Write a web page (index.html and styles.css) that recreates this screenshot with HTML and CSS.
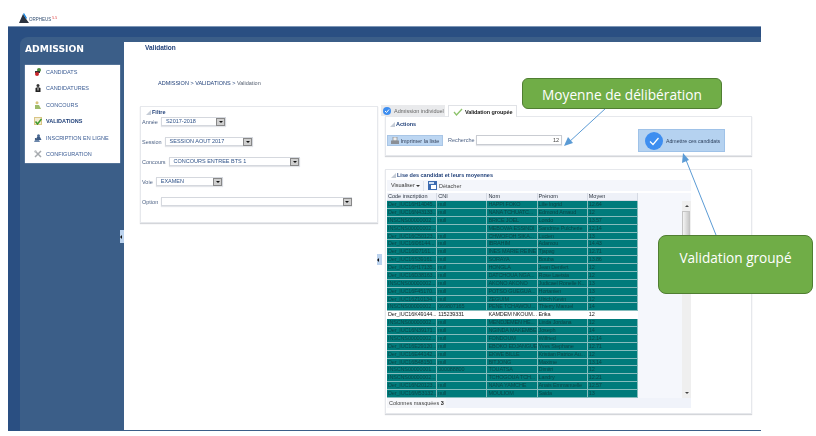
FILE: index.html
```html
<!DOCTYPE html>
<html lang="fr">
<head>
<meta charset="UTF-8">
<title>Morpheus - Validation</title>
<link rel="stylesheet" href="styles.css">
</head>
<body>
<div class="page">

  <div class="logo">
    <svg width="11" height="10" viewBox="0 0 11 10"><path d="M0 10 4 1l2 3 1.500 2.500L10 10z" fill="#2b3340"/><path d="M4 1l1-1 3 5-1 1z" fill="#1c86e0"/></svg>
    <span class="logo-name">ORPHEUS</span><span class="logo-ver">5.5</span>
  </div>

  <div class="frame">
    <aside class="side">
      <h2>ADMISSION</h2>
      <nav class="menu">
        <a><svg viewBox="0 0 8 8"><circle cx="5" cy="2" r="2" fill="#4c8a3a"/><rect x="1" y="3" width="5" height="2" fill="#333"/><circle cx="3" cy="6" r="2" fill="#c9252b"/></svg>CANDIDATS</a>
        <a><svg viewBox="0 0 8 8"><circle cx="4" cy="1.600" r="1.500" fill="#333"/><path d="M1.500 8V4l2.500-1 2.500 1v4z" fill="#222"/><path d="M3.500 3.500h1v3h-1z" fill="#ddd"/></svg>CANDIDATURES</a>
        <a><svg viewBox="0 0 8 8"><circle cx="3" cy="1.800" r="1.500" fill="#d8c27a"/><path d="M1 8V4h4l2 4z" fill="#9dbb6a"/></svg>CONCOURS</a>
        <a class="on"><svg viewBox="0 0 8 8"><rect width="8" height="8" fill="#d9c586"/><rect x="1" y="1" width="6" height="6" fill="#f3ecd2"/><path d="M1.500 4.500 3.500 7 7.500 2" fill="none" stroke="#3d9a2c" stroke-width="1.500"/></svg>VALIDATIONS</a>
        <a><svg viewBox="0 0 8 8"><circle cx="4.500" cy="1.800" r="1.500" fill="#4b6a94"/><path d="M2 6l1-3h3l1.500 3z" fill="#3d5c86"/><circle cx="1.800" cy="5" r="1" fill="#2f4a70"/><path d="M0 8l1-2h4l1 2z" fill="#6c87ab"/></svg>INSCRIPTION EN LIGNE</a>
        <a><svg viewBox="0 0 8 8"><path d="M1 1l6 6M7 1 1 7" stroke="#a5a9ad" stroke-width="1.500"/><circle cx="1.500" cy="1.500" r="1.200" fill="#c2c5c8"/></svg>CONFIGURATION</a>
      </nav>
    </aside>

    <div class="main">
      <div class="content">
        <h1>Validation</h1>
        <p class="crumb">ADMISSION &gt; VALIDATIONS &gt; <span>Validation</span></p>

        <div class="panels">
          <section class="card filter">
            <h3>Filtre</h3>
            <div class="field first"><label>Année</label><div class="sel w-annee"><span>S2017-2018</span><i></i></div></div>
            <div class="field"><label>Session</label><div class="sel w-session"><span>SESSION AOUT 2017</span><i></i></div></div>
            <div class="field"><label>Concours</label><div class="sel w-concours"><span>CONCOURS ENTREE BTS 1</span><i></i></div></div>
            <div class="field"><label>Voie</label><div class="sel w-voie"><span>EXAMEN</span><i></i></div></div>
            <div class="field"><label>Option</label><div class="sel w-option"><span></span><i></i></div></div>
          </section>

          <div class="right">
            <div class="tabs">
              <div class="tab"><svg viewBox="0 0 8 8"><circle cx="4" cy="4" r="4" fill="#3e8ef0"/><path d="M2 4l1.500 1.500L6 2.500" fill="none" stroke="#fff"/></svg>Admission individuel</div>
              <div class="tab active"><svg viewBox="0 0 10 8"><path d="M1 4l2.500 3L9 1" fill="none" stroke="#8cc26a" stroke-width="1.300"/></svg>Validation groupée</div>
            </div>

            <section class="card actions">
              <h3>Actions</h3>
              <div class="action-row">
                <button class="print"><svg viewBox="0 0 8 8"><rect x="2" y="0" width="4" height="4" fill="#eee" stroke="#777" stroke-width=".6"/><rect y="3.500" width="8" height="3.500" fill="#8a8f96"/></svg>Imprimer la liste</button>
                <label>Recherche</label>
                <div class="search">12</div>
                <button class="admit"><svg viewBox="0 0 18 18"><circle cx="9" cy="9" r="9" fill="#3e8ef0"/><path d="M5 9.500l3 3 5.500-6.500" fill="none" stroke="#fff" stroke-width="1.200"/></svg>Admettre ces candidats</button>
              </div>
            </section>

            <section class="card list">
              <h3>Lise des candidat et leurs moyennes</h3>
              <div class="toolbar">
                <span class="view">Visualiser <b></b></span>
                <span class="sep"></span>
                <svg viewBox="0 0 9 9"><rect width="9" height="9" fill="#3c6bb0"/><rect x="1" y="1" width="5" height="2" fill="#cfe0f5"/><rect x="3" y="4" width="5" height="4" fill="#fff"/></svg>
                <span>Détacher</span>
              </div>
              <div class="grid">
                <div class="rows">
                  <div class="row head"><span>Code inscription</span><span>CNI</span><span>Nom</span><span>Prénom</span><span>Moyen</span></div>
                  <div class="row"><span>Der_IUC16H14045...</span><span>null</span><span>HAPPI FOKO</span><span>Lilie Ingrid</span><span>12.64</span></div>
                  <div class="row"><span>Der_IUC16N43133...</span><span>null</span><span>NANA TCHUATC...</span><span>Edmond Arnaud</span><span>12</span></div>
                  <div class="row"><span>INSCNS00000002...</span><span>null</span><span>BRICE JOEL</span><span>Londo</span><span>13.57</span></div>
                  <div class="row"><span>INSCNS00000002...</span><span></span><span>MEBOWA ESSINDI</span><span>Sandrine Pulcherie</span><span>12.14</span></div>
                  <div class="row"><span>Der_IUC16C50123...</span><span>null</span><span>CHWOFOH SIKA...</span><span>Lucien</span><span>13</span></div>
                  <div class="row"><span>Der_IUC16I06144...</span><span>null</span><span>IBRAHIM</span><span>Adamou</span><span>14.43</span></div>
                  <div class="row"><span>Der_IUC16I07161...</span><span>null</span><span>INES MARIE REINE</span><span>Tjapag</span><span>12.71</span></div>
                  <div class="row"><span>Der_IUC16S39161...</span><span>null</span><span>SORAYA</span><span>Bouba</span><span>13.86</span></div>
                  <div class="row"><span>Der_IUC16H17135...</span><span>null</span><span>HONGLA</span><span>Jean Denfert</span><span>12</span></div>
                  <div class="row"><span>Der_IUC16D38163...</span><span>null</span><span>DATCHOUA NGA...</span><span>Rose Laetsia</span><span>12</span></div>
                  <div class="row"><span>INSCNS00000002...</span><span>null</span><span>AKONO AKONO</span><span>Judicael Ronelle K...</span><span>13</span></div>
                  <div class="row"><span>Der_IUC16F45170...</span><span>null</span><span>POTSO GUEGUA...</span><span>Hortanien</span><span>13</span></div>
                  <div class="row"><span>Der_IUC16Z10134...</span><span>null</span><span>ZEGUIM</span><span>Ulrich Kevin</span><span>12</span></div>
                  <div class="row"><span>INSCNS00000002...</span><span>069807165</span><span>PENE TCHAWOU...</span><span>Thierry Manuel</span><span>14</span></div>
                  <div class="row plain"><span>Der_IUC16K49144...</span><span>115239331</span><span>KAMDEM NKOUM...</span><span>Erika</span><span>12</span></div>
                  <div class="row"><span>INSCNS00000002...</span><span>null</span><span>MENDJEMEN HE...</span><span>Linda Jordana</span><span>12</span></div>
                  <div class="row"><span>Der_IUC16N39171...</span><span>null</span><span>NGINDA MAKEMBE</span><span>Joseph</span><span>14</span></div>
                  <div class="row"><span>INSCNS00000002...</span><span>null</span><span>FONDOUM</span><span>Wilfried</span><span>12.14</span></div>
                  <div class="row"><span>Der_IUC16E29120...</span><span>null</span><span>EBOKO EDJANGUE</span><span>Yves Stephane</span><span>12.71</span></div>
                  <div class="row"><span>Der_IUC16E44142...</span><span>null</span><span>EKWE BILLE</span><span>Kristian Patrice Au...</span><span>12</span></div>
                  <div class="row"><span>Der_IUC16B48150...</span><span>null</span><span>BITJONG</span><span>Maxime</span><span>13.14</span></div>
                  <div class="row"><span>INSCNS00000001...</span><span>000088800</span><span>TOUATSA</span><span>Dimitri</span><span>12</span></div>
                  <div class="row"><span>INSCNS00000002...</span><span></span><span>TCHOGOUA TCH...</span><span>Landry</span><span>12.21</span></div>
                  <div class="row"><span>Der_IUC16N20123...</span><span>null</span><span>NANA YAMCHE</span><span>Anais Emmanuelle</span><span>12.57</span></div>
                  <div class="row"><span>Der_IUC16M53132...</span><span>null</span><span>MOULIOM</span><span>Saida</span><span>13</span></div>
                </div>
                <div class="scroll"><i class="up"></i><div class="thumb"></div><i class="down"></i></div>
              </div>
              <div class="masked"><span>Colonnes masquées <b>3</b></span></div>
            </section>
          </div>
        </div>
      </div>
    </div>
  </div>

  <div class="handle h-side"></div>
  <div class="handle h-mid"></div>

  <svg class="arrows" width="816" height="436" viewBox="0 0 816 436">
    <path d="M606 108 568 143" stroke="#5b9bd5" fill="none"/>
    <path d="M564 146l4-9 5 6z" fill="#5b9bd5"/>
    <path d="M716 235 686 160" stroke="#5b9bd5" fill="none"/>
    <path d="M683 153l6 7-7 3z" fill="#5b9bd5"/>
  </svg>
  <div class="callout c-moy">Moyenne de délibération</div>
  <div class="callout c-val">Validation groupé</div>
</div>
</body>
</html>
```
FILE: styles.css
```css
*{box-sizing:border-box}
body{margin:0;background:#fff;font-family:"Liberation Sans",Arial,sans-serif;font-size:5.5px;color:#1f3f78}
.page{position:relative;width:816px;height:436px;overflow:hidden}

/* logo */
.logo{height:26px;padding:13px 0 0 19px;display:flex;align-items:flex-start;filter:blur(.3px)}
.logo-name{font-size:4.500px;margin:4px 0 0 -1px;color:#334f72}
.logo-ver{font-size:3.500px;color:#d33;margin:3px 0 0 1px}

/* frame */
.frame{margin-left:8px;width:753px;height:405px;padding:10px 0 0 12px;display:flex;background:#2a4f82;border-top:1px solid #7d96b6;filter:blur(.3px)}
.side{width:104px;background:#3b5e88;border-top-left-radius:8px;padding:6px 4px 0 5px}
.side h2{margin:0 0 10px;height:12px;line-height:12px;font:bold 9.200px/12px "DejaVu Sans",sans-serif;color:#fff}
.menu{background:#fff;height:98px;box-shadow:0 0 1px #cfd8e4}
.menu a{display:flex;align-items:flex-start;height:16.450px;padding:4px 0 0 9px;gap:4px;color:#3b5c94;line-height:6px;white-space:nowrap}
.menu a svg{width:8px;height:8px;flex:none;margin-top:-1px}
.menu a.on{font-weight:bold;color:#1f3f78}

.main{flex:1;padding:5px 0 1px;background:#3b5e88}
.content{height:100%;background:#fff;padding-top:2px}
h1{margin:0 0 0 21px;font-size:6.500px;line-height:7px;font-weight:bold;color:#1f3f78}
.crumb{margin:28px 0 0 34px;line-height:8px}
.crumb span{color:#555f70}
.panels{display:flex;margin:18px 0 0 16px}

/* cards */
.card{background:#fff;border:1px solid #e6e8ec;box-shadow:0 1px 1px #d4d6da}
.card h3{margin:0;font-size:5.500px;line-height:7px;font-weight:bold;color:#1f3f78;padding-left:10px;position:relative}
.card h3::before{content:"";position:absolute;left:4px;top:1px;border-style:solid;border-width:0 0 5px 5px;border-color:transparent transparent #c5ccd6 transparent}

.filter{width:238px;height:117px;margin-top:1px;padding:2px 0 0 1px}
.filter h3{padding-left:10px}
.field{display:flex;align-items:center;gap:3px;height:9px;margin-top:11px;color:#4d6285}
.field.first{margin-top:1px}
.sel{height:9px;display:flex;justify-content:space-between;background:#fff;border:1px solid #d5d8de;box-shadow:0 1px 1px #e3e5e9;padding-left:4px;line-height:7px;color:#2f5288;white-space:nowrap}
.sel i{width:9px;height:8px;margin:-.5px -.5px 0 0;background:#cfcfcf;border:1px solid #888;position:relative;flex:none}
.sel i::after{content:"";position:absolute;left:1.500px;top:2.500px;border:2px solid transparent;border-top:2.500px solid #111}
.w-annee{width:65px}
.w-session{width:88px}
.w-concours{width:131px}
.w-voie{width:67px}
.w-option{width:191px}

/* right column */
.right{width:372px;margin-left:3px}
.tabs{display:flex;height:11px;gap:3px;position:relative;z-index:1}
.tab{display:flex;align-items:center;gap:3px;width:64px;height:11px;padding-left:2px;background:#e9eaec;color:#666;white-space:nowrap}
.tab svg{width:8px;height:8px;flex:none}
.tab.active{width:69px;height:12px;background:#fff;color:#222;font-weight:bold;letter-spacing:-.1px;border:1px solid #e0e2e6;border-bottom:0;padding-left:4px;gap:2px}
.tab.active svg{width:10px}

.actions{margin:0 0 0 4px;width:367px;height:40px;padding-top:4px}
.action-row{display:flex;align-items:flex-start;margin-top:7px;padding-left:1px}
.print{display:flex;align-items:center;gap:1.500px;width:56px;height:11px;padding:0 0 0 3px;margin:0;border:1px solid #a9c6e6;background:#bcd6f2;font:inherit;color:#33415a;white-space:nowrap}
.print svg{width:8px;height:8px;flex:none}
.action-row label{margin:2px 0 0 5px;color:#4d6285;width:28px}
.search{width:86px;height:10px;border:1px solid #c9ccd2;box-shadow:0 1px 1px #e3e5e9;text-align:right;padding-right:2px;line-height:8px;color:#444}
.admit{display:flex;align-items:center;gap:3px;width:87px;height:23px;margin:-6px 0 0 76px;padding:0 0 0 6px;border:1px solid #9fc2e8;background:#b5d2f0;font:inherit;font-size:5.200px;color:#2c3f5c;white-space:nowrap}
.admit svg{width:18px;height:18px;flex:none}

.list{margin:13px 0 0 4px;width:367px;height:245px;padding:2px 0 0 1px}
.toolbar{display:flex;align-items:center;width:304px;height:11px;background:#f4f6fb;margin:1px 0 2px;color:#444;gap:2px}
.view{margin-left:4px;width:30px;color:#333;white-space:nowrap}
.view b{display:inline-block;border:2px solid transparent;border-top:2.500px solid #333;vertical-align:-2px}
.sep{width:1px;height:10px;background:#dfe3ea;margin-right:2px}
.toolbar svg{width:9px;height:9px}

.grid{width:304px;display:flex;background:#f5f7fc}
.rows{width:251px;flex:none}
.row{display:grid;grid-template-columns:repeat(5,50.200px);height:7.880px;background:#007b7b;color:#0a4749;border-bottom:1px solid #86bdbd;letter-spacing:-.15px}
.row span{padding-left:1px;line-height:6.800px;white-space:nowrap;overflow:hidden;border-right:1px solid #86bdbd}
.row.head{height:8px;background:#eef1f8;color:#2c3440;border-bottom:1px solid #d5dae4;letter-spacing:0}
.row.head span{border-right:1px solid #d5dae4}
.row.plain{background:#fff;color:#222;border-bottom-color:#fff}
.row.plain span{border-right-color:#fff}

.scroll{width:9px;margin:8px 0 0 44px;background:#efefef;position:relative;padding-top:10px}
.thumb{width:8px;height:36px;background:linear-gradient(90deg,#f4f4f4,#c9c9c9);border:1px solid #c4c4c4}
.scroll i{position:absolute;left:2.500px;border:2px solid transparent}
.scroll .up{top:2px;border-bottom:2.500px solid #444}
.scroll .down{bottom:2px;border-top:2.500px solid #444}

.masked{width:304px;height:10px;background:#f0f3fa;color:#444;line-height:10px}
.masked span{display:inline-block;height:10px;padding:0 2px;background:#f6f7fa}
.masked b{font-weight:bold;color:#222}

/* splitter handles */
.handle{position:absolute;background:#bcd3ee}
.handle::after{content:"";position:absolute;top:50%;left:0;margin-top:-2px;border:2px solid transparent;border-right:2.500px solid #111;border-left:0}
.h-side{left:120px;top:230px;width:4px;height:13px}
.h-mid{left:377px;top:254px;width:5px;height:11px}

/* annotations */
.arrows{position:absolute;left:0;top:0}
.callout{position:absolute;display:flex;justify-content:center;background:#70ad47;border:1px solid #507e32;border-radius:6px;color:#fff;font-family:"Open Sans",sans-serif;white-space:nowrap}
.c-moy{left:522px;top:78px;width:200px;height:31px;font-size:13.700px;line-height:31px}
.c-val{left:658px;top:235px;width:155px;height:59px;font-size:13.600px;line-height:43px;border-radius:8px}
```
